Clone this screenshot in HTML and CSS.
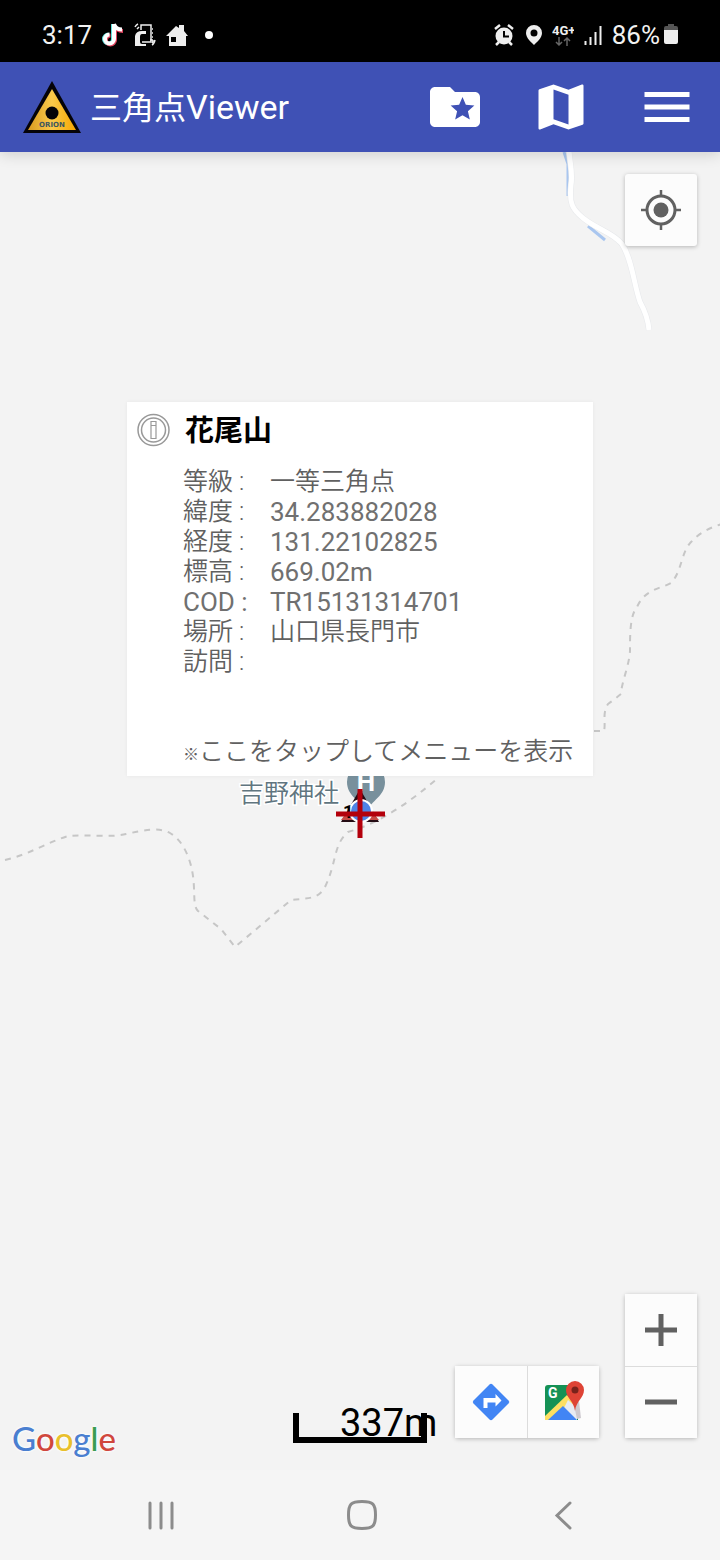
FILE: index.html
```html
<!DOCTYPE html>
<html lang="ja">
<head>
<meta charset="utf-8">
<meta name="viewport" content="width=device-width, initial-scale=1">
<title>三角点Viewer</title>
<link rel="stylesheet" href="styles.css">
</head>
<body>
<div class="screen">
  <div class="status">
    <div class="status-group">
      <span class="status-text">3:17</span>
      <svg width="22" height="24" viewBox="0 0 22 24" aria-hidden="true">
        <g fill="none" stroke-width="4"><path d="M12 1v15a4.500 4.500 0 1 1-4.500-4.500" stroke="#5fe0dc" transform="translate(-1 0)"/><path d="M12 1v15a4.500 4.500 0 1 1-4.500-4.500M12 2c1 3.500 4 5 8 5" stroke="#e0445f" transform="translate(1 1)"/><path d="M12 1v15a4.500 4.500 0 1 1-4.500-4.500M12 1c1 4 4 5.500 8 5.500" stroke="#fff"/></g>
      </svg>
      <svg width="22" height="24" viewBox="0 0 22 24" fill="none" stroke="#eee" stroke-width="1.500" aria-hidden="true">
        <path d="M7 7V2h10v3M17 7v2M17 11v2M17 15v4H8M16 6h3M16 10h3M16 14h3M16 17h3"/><path d="M1 4q1-2 3-3M3 6q1-1 2-2M21 17q-1 4-3 5M19 17q0 2-1 3"/>
        <path d="M1 13q1-5 7-5h4v3H8q-2 0-2 3v5q0 2 2 2h4v2H1z" fill="#eee" stroke="none"/>
      </svg>
      <svg width="22" height="24" viewBox="0 0 22 24" aria-hidden="true">
        <path fill="#eee" fill-rule="evenodd" d="M0 13 10 3l3 2V2h5v6l4 5h-2v10H3V13zM5 14v5h5v-5z"/>
      </svg>
      <svg width="22" height="24" viewBox="0 0 22 24" aria-hidden="true"><circle cx="11" cy="12" r="4" fill="#fff"/></svg>
    </div>
    <div class="status-group">
      <svg width="22" height="24" viewBox="0 0 22 24" aria-hidden="true">
        <circle cx="10" cy="13" r="8.500" fill="#eee"/><path d="M1 6l5-4M19 6l-5-4M5 19l-3 3M15 19l3 3" stroke="#eee" stroke-width="2.500"/><path d="M10 8v5.500h5" fill="none" stroke="#000" stroke-width="2"/>
      </svg>
      <svg width="16" height="24" viewBox="0 0 16 24" aria-hidden="true">
        <path fill="#eee" fill-rule="evenodd" d="M8 2a8 8 0 0 0-8 8c0 5 5 9 8 12 3-3 8-7 8-12a8 8 0 0 0-8-8zM8 6.500a3.500 3.500 0 1 1 0 7 3.500 3.500 0 0 1 0-7z"/>
      </svg>
      <svg width="22" height="24" viewBox="0 0 22 24" aria-hidden="true">
        <text class="net-label" x="0" y="12" fill="#eee">4G+</text><path d="M7 14v8M4 19l3 3 3-3M15 23v-8M12 18l3-3 3 3" fill="none" stroke="#666" stroke-width="1.500"/>
      </svg>
      <svg width="18" height="24" viewBox="0 0 18 24" aria-hidden="true"><path d="M1.500 22v-4M6.500 22V14M11.500 22V9M16.500 22V3" stroke="#eee" stroke-width="2"/></svg>
      <span class="battery">
        <span class="status-text">86%</span>
        <svg width="14" height="24" viewBox="0 0 14 24" aria-hidden="true"><path d="M0 8V5q0-2 2-2h2V1h6v2h2q2 0 2 2v3z" fill="#555"/><path d="M0 7h14v12q0 2-2 2H2q-2 0-2-2z" fill="#eee"/></svg>
      </span>
    </div>
  </div>

  <header class="appbar">
    <svg class="logo" width="60" height="54" viewBox="0 0 60 54" aria-hidden="true">
      <defs><linearGradient id="gold"><stop offset="0" stop-color="#d99a20"/><stop offset=".5" stop-color="#fac94b"/><stop offset="1" stop-color="#f7a700"/></linearGradient></defs>
      <path d="M30 1 1 53h58z" fill="#050308"/><path d="M30 9 6 50h48z" fill="url(#gold)"/>
      <circle cx="30" cy="33" r="6.500" fill="#050308"/><text class="logo-text" x="30" y="47" text-anchor="middle" fill="#3d5660">ORION</text>
    </svg>
    <h1 class="title">三角点<span class="title-latin">Viewer</span></h1>
    <div class="actions">
      <button class="action" type="button" aria-label="お気に入りフォルダ"><svg viewBox="0 0 24 24"><path fill="#fff" d="M20 6h-8l-2-2H4c-1.100 0-2 .9-2 2v12c0 1.100.9 2 2 2h16c1.100 0 2-.9 2-2V8c0-1.100-.9-2-2-2zm-2.060 11L15 15.280 12.060 17l.78-3.330-2.590-2.240 3.410-.29L15 8l1.340 3.140 3.410.29-2.590 2.240.78 3.330z"/></svg></button>
      <button class="action" type="button" aria-label="地図"><svg viewBox="0 0 24 24"><path fill="#fff" d="M20.500 3l-.16.030L15 5.100 9 3 3.360 4.900c-.21.070-.36.250-.36.480V20.500c0 .28.22.5.5.5l.16-.03L9 18.900l6 2.100 5.640-1.900c.21-.07.36-.25.36-.48V3.500c0-.28-.22-.5-.5-.5zM15 19l-6-2.110V5l6 2.110V19z"/></svg></button>
      <button class="action" type="button" aria-label="メニュー"><svg viewBox="0 0 24 24"><path fill="#fff" d="M3 18h18v-2H3v2zm0-5h18v-2H3v2zm0-7v2h18V6H3z"/></svg></button>
    </div>
  </header>

  <main class="map">
    <svg class="map-canvas" viewBox="0 152 720 1318" preserveAspectRatio="xMidYMid slice" aria-hidden="true">
      <g fill="none" stroke="#a9c6ef" stroke-width="3"><path d="M564 152l4 12v32"/><path d="M588 226l17 14"/></g>
      <path d="M569 152C570 165 573 172 571 185C569 203 572 209 583 218C598 230 612 232 622 244C632 259 634 285 640 302C645 311 648 318 649 330" fill="none" stroke="#e6e8eb" stroke-width="6"/>
      <path d="M569 150C570 165 573 172 571 185C569 203 572 209 583 218C598 230 612 232 622 244C632 259 634 285 640 302C645 311 648 318 649 330" fill="none" stroke="#fff" stroke-width="5"/>
      <g fill="none" stroke="#c6c6c6" stroke-width="2" stroke-dasharray="6 6">
        <path d="M5 860C28 855 48 842 68 836C88 834 110 838 126 834C144 830 160 827 170 833C184 841 190 860 192 870C196 890 192 905 198 911L221 929L235 947L291 900C306 898 318 900 325 887C337 862 333 845 348 832C380 823 410 802 438 778"/>
        <path d="M594 731h10C606 723 602 713 608 704Q615 699 621 694C621 684 630 663 630 650C630 635 630 615 637 607C645 589 660 589 671 583C682 572 681 551 692 541C700 532 712 527 722 524"/>
      </g>
      <path d="M366 763a19 19 0 0 0-19 19c0 14 13 18 19 30 6-12 19-16 19-30a19 19 0 0 0-19-19z" fill="#78909c"/>
      <text class="pin-letter" x="366" y="791" text-anchor="middle" fill="#fff">H</text>
      <text class="place" x="239" y="802">吉野神社</text>
      <path d="M360 789l19 33h-38z" fill="#240c14"/><path d="M347 812l7 8h-13zM372 812l7 8h-13z" fill="#c84a46"/>
      <circle cx="361" cy="811" r="12" fill="#fff"/><circle cx="361" cy="811" r="10" fill="#4f83e6"/>
      <text class="grade" x="343" y="818">1</text>
      <path d="M336 814h49M360 789v49" stroke="#b3000c" stroke-width="5"/>
    </svg>

    <section class="info">
      <svg class="info-icon" width="34" height="34" viewBox="0 0 34 34" fill="none" stroke="#999" aria-hidden="true"><circle cx="16.500" cy="17" r="15.500" stroke-width="1.500"/><circle cx="16.500" cy="17" r="12" stroke-width="1.500"/><path d="M14 8.500h5v4h-5zM14 12.500h5v13h-5z" stroke-width="1.200"/></svg>
      <h2 class="info-title">花尾山</h2>
      <dl class="facts">
        <dt>等級 :</dt><dd>一等三角点</dd>
        <dt>緯度 :</dt><dd class="latin">34.283882028</dd>
        <dt>経度 :</dt><dd class="latin">131.22102825</dd>
        <dt>標高 :</dt><dd class="latin">669.02m</dd>
        <dt class="latin">COD :</dt><dd class="latin">TR15131314701</dd>
        <dt>場所 :</dt><dd>山口県長門市</dd>
        <dt>訪問 :</dt><dd></dd>
      </dl>
      <p class="hint"><span class="mark">※</span>ここをタップしてメニューを表示</p>
    </section>

    <button class="tile locate" type="button" aria-label="現在地"><svg width="40" height="40" viewBox="0 0 40 40"><circle cx="20" cy="20" r="14" fill="none" stroke="#616161" stroke-width="3"/><circle cx="20" cy="20" r="7.500" fill="#616161"/><path d="M20 0v6M20 34v6M0 20h6M34 20h6" stroke="#616161" stroke-width="2.500"/></svg></button>

    <div class="google"><span class="b">G</span><span class="r">o</span><span class="y">o</span><span class="b">g</span><span class="g">l</span><span class="r">e</span></div>
    <div class="scale">337m</div>

    <div class="controls">
      <div class="row">
        <button class="tile" type="button" aria-label="ルート"><svg width="38" height="38" viewBox="0 0 38 38"><path d="M17.500 1.500q1.500-1.500 3 0l16 16q1.500 1.500 0 3l-16 16q-1.500 1.500-3 0l-16-16q-1.500-1.500 0-3z" fill="#4285f4"/><path d="M11.500 25V15h12v-4l6 6.500-6 6v-4h-8V25z" fill="#fff"/></svg></button>
        <button class="tile" type="button" aria-label="Googleマップ"><svg width="42" height="42" viewBox="0 0 42 42">
          <path d="M5 4h30v35H5q-3 0-3-3V7q0-3 3-3z" fill="#159155"/><path d="M2 35 24 14l10 9v16H2z" fill="#fddf62"/><path d="M25 19l9 8v12H12L21 27z" fill="#e6ebf3"/><path d="M5 39 20 25l14 14z" fill="#4285f4"/>
          <path d="M31 24l5-4 2 17-4 1z" fill="#cdc9cf"/>
          <path d="M32 0a9 9 0 0 0-9 9c0 8 8 11 9 21 1-10 9-13 9-21a9 9 0 0 0-9-9z" fill="#de4335"/><circle cx="32" cy="9" r="3.500" fill="#78221b"/>
          <text class="maps-g" x="5" y="17" fill="#fff">G</text></svg></button>
      </div>
      <div class="column">
        <button class="tile" type="button" aria-label="拡大"><svg width="34" height="34" viewBox="0 0 34 34"><path d="M1 17h32M17 1v32" stroke="#616161" stroke-width="5"/></svg></button>
        <button class="tile" type="button" aria-label="縮小"><svg width="34" height="34" viewBox="0 0 34 34"><path d="M1 16h32" stroke="#616161" stroke-width="5"/></svg></button>
      </div>
    </div>
  </main>

  <nav class="navbar">
    <button class="nav" type="button" aria-label="履歴"><svg width="30" height="30" viewBox="0 0 30 30"><path d="M4 3v25M15 3v25M26 3v25" stroke="#8c8c8c" stroke-width="3" stroke-linecap="round"/></svg></button>
    <button class="nav" type="button" aria-label="ホーム"><svg width="30" height="30" viewBox="0 0 30 30"><path d="M15 1.500c11 0 13.500 2.500 13.500 13.500S26 28.500 15 28.500 1.500 26 1.500 15 4 1.500 15 1.500z" fill="none" stroke="#8c8c8c" stroke-width="3"/></svg></button>
    <button class="nav" type="button" aria-label="戻る"><svg width="30" height="30" viewBox="0 0 30 30"><path d="M22 3 9 15.500l13 12.500" fill="none" stroke="#8c8c8c" stroke-width="3" stroke-linecap="round"/></svg></button>
  </nav>
</div>
</body>
</html>
```
FILE: styles.css
```css
* { box-sizing: border-box; }
body {
  margin: 0;
  font-family: Roboto, "Noto Sans CJK JP", sans-serif;
  background: #f3f3f3;
}
button { padding: 0; border: 0; background: none; font: inherit; }
svg { display: block; }
.screen { display: flex; flex-direction: column; min-height: 100vh; }

.status {
  display: flex;
  justify-content: space-between;
  padding: 8px 42px 0;
  height: 62px;
  background: #000;
}
.status-group { display: flex; align-items: center; gap: 10px; }
.status-text { color: #f2f2f2; font-size: 26px; }
.battery { display: flex; align-items: center; gap: 4px; }
.net-label { font-size: 13px; font-weight: 700; }

.appbar {
  position: relative;
  z-index: 1;
  display: flex;
  align-items: center;
  height: 90px;
  padding: 0 23px 0 22px;
  background: #3f51b5;
  box-shadow: 0 2px 14px rgba(0, 0, 0, 0.16);
}
.title {
  margin: 0 0 0 8px;
  color: #fff;
  font-size: 32px;
  font-weight: 400;
  line-height: 40px;
}
.title-latin { font-size: 34px; }
.logo-text { font: 700 7px "DejaVu Sans", sans-serif; }
.actions { display: flex; gap: 46px; margin-left: auto; }
.action { width: 60px; height: 60px; }

.map { position: relative; flex: 1; overflow: hidden; background: #f3f3f3; }
.map-canvas { position: absolute; inset: 0; width: 100%; height: 100%; }
.place {
  font-size: 25px;
  font-weight: 350;
  fill: #60757f;
  stroke: #fff;
  stroke-width: 3px;
  paint-order: stroke;
}
.pin-letter { font-size: 26px; font-weight: 700; }
.grade { font-size: 18px; font-weight: 700; }

.info {
  position: absolute;
  top: 250px;
  left: 50%;
  transform: translateX(-50%);
  display: grid;
  grid-template-columns: 34px 1fr;
  column-gap: 14px;
  width: 466px;
  padding: 11px 10px 6px;
  background: #fff;
  box-shadow: 0 0 4px rgba(0, 0, 0, 0.05);
}
.info-title { margin: 0; font-size: 29px; line-height: 36px; color: #000; }
.facts {
  grid-column: 2;
  display: grid;
  grid-template-columns: 87px 1fr;
  grid-auto-rows: 30px;
  margin: 18px 0 60px -2px;
}
.facts dt, .facts dd, .hint {
  margin: 0;
  color: #606060;
  font-size: 25px;
  font-weight: 350;
  line-height: 30px;
  white-space: nowrap;
}
.facts .latin { font-size: 26px; font-weight: 400; color: #707070; }
.hint { grid-column: 2; margin-left: -2px; }
.mark { font-size: 16px; }

.tile {
  display: grid;
  place-items: center;
  width: 72px;
  height: 72px;
  background: #fcfcfc;
}
.locate, .row, .column { border-radius: 3px; box-shadow: 0 1px 4px rgba(0, 0, 0, 0.25); }
.locate { position: absolute; top: 22px; right: 23px; }
.controls {
  position: absolute;
  right: 23px;
  bottom: 32px;
  display: flex;
  align-items: flex-end;
  gap: 26px;
}
.row { display: flex; }
.row .tile + .tile { border-left: 1px solid #dcdcdc; }
.column .tile + .tile { border-top: 1px solid #dcdcdc; }
.maps-g { font: 700 14px Roboto, sans-serif; }

.google {
  position: absolute;
  left: 12px;
  bottom: 12px;
  font: 500 33px/40px Lato, sans-serif;
  text-shadow: 0 0 3px #fff, 0 0 3px #fff;
}
.b { color: #4a7fd0; }
.r { color: #d0473d; }
.y { color: #e9c02c; }
.g { color: #3a9c52; }

.scale {
  position: absolute;
  left: calc(50% - 67px);
  bottom: 27px;
  width: 134px;
  height: 30px;
  padding-left: 41px;
  border: solid #000;
  border-width: 0 6px 6px;
  font-size: 38px;
  line-height: 20px;
  color: #000;
}

.navbar { display: flex; height: 90px; padding: 0 57px 0 60px; background: #f5f5f5; }
.nav { display: grid; flex: 1; place-items: center; }
```
